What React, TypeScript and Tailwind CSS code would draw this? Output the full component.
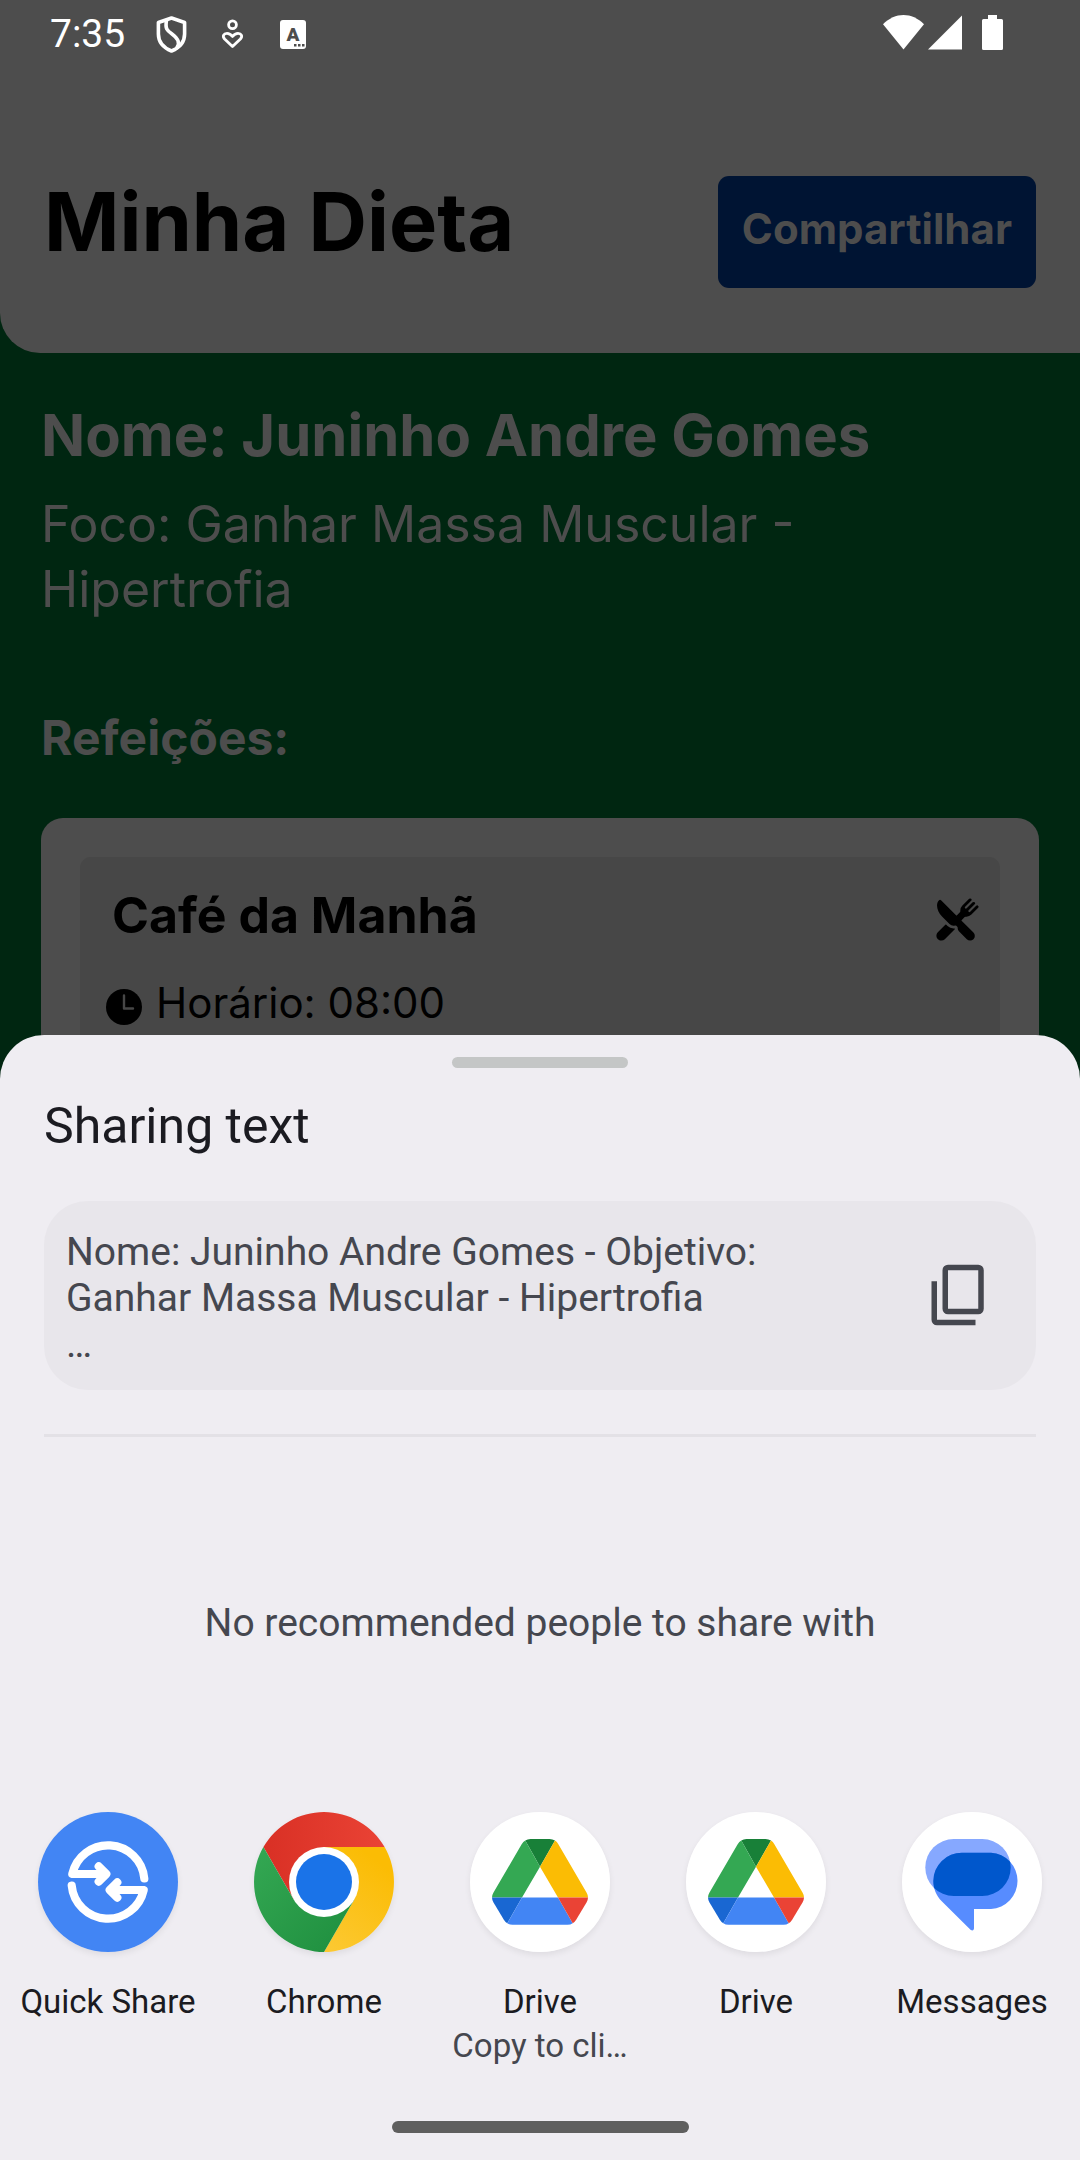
import type { ReactNode } from "react";
import { IoRestaurant } from "react-icons/io5";

function ShieldIcon() {
  return (
    <svg className="h-[37px] w-[31px]" viewBox="0 0 31 37" fill="none" stroke="currentColor" strokeWidth="3.6" strokeLinejoin="round" strokeLinecap="round" aria-hidden="true">
      <path d="M15.500 2 28.600 6.500v11.500C28.600 26.500 23 32 15.500 35 8 32 2.400 26.500 2.400 18V6.500Z" />
      <path d="M10.500 4.500C9 12.500 11 14.500 16 18c5.500 4 8.500 8 5 13.500" />
    </svg>
  );
}

function WellbeingIcon() {
  return (
    <svg className="h-[30px] w-[23px]" viewBox="0 0 23 30" fill="none" stroke="currentColor" strokeWidth="2.800" strokeLinejoin="round" aria-hidden="true">
      <circle cx="11.500" cy="5.700" r="3.900" />
      <path d="M11.500 27.500 3.600 20C1 17 2.800 14.300 6 14.300c2.500 0 4.200 1.500 5.500 3.200 1.300-1.700 3-3.200 5.500-3.200 3.200 0 5 2.700 2.400 5.700Z" />
    </svg>
  );
}

function LetterIcon() {
  return (
    <svg className="h-[29px] w-[26px]" viewBox="0 0 26 29" aria-hidden="true">
      <rect width="26" height="29" rx="3" fill="#fff" />
      <text x="13" y="20.500" textAnchor="middle" className="fill-[#4d4d4d] font-['Roboto',sans-serif] text-[19px] font-black">A</text>
      <path d="M14 24h2.500v2.500H14zM18 24h2.500v2.500H18zM22 24h2.500v2.500H22z" fill="#4d4d4d" />
    </svg>
  );
}

function StatusBar() {
  return (
    <div className="flex h-[68px] items-center justify-between pr-[77px] pl-[50px] font-['Roboto',sans-serif] text-white">
      <div className="flex items-center">
        <span className="mr-[31px] text-[39px] leading-[46px]">7:35</span>
        <span className="mr-[34px]"><ShieldIcon /></span>
        <span className="mr-9"><WellbeingIcon /></span>
        <LetterIcon />
      </div>
      <div className="flex items-center pb-[3px]">
        <svg className="mr-1 h-[35px] w-[41px]" viewBox="0 0 41 35" fill="currentColor" aria-hidden="true">
          <path d="M0 9.300C12-3.100 29-3.100 41 9.300L20.500 34.500Z" />
        </svg>
        <svg className="mr-5 h-[35px] w-[34px]" viewBox="0 0 34 35" fill="currentColor" aria-hidden="true">
          <path d="M34 .5v34H0Z" />
        </svg>
        <svg className="h-[35px] w-[21px]" viewBox="0 0 21 35" fill="currentColor" aria-hidden="true">
          <path d="M6 0h9v4h4.500A1.500 1.500 0 0 1 21 5.500v28a1.500 1.500 0 0 1-1.500 1.500h-18A1.500 1.500 0 0 1 0 33.500v-28A1.500 1.500 0 0 1 1.500 4H6Z" />
        </svg>
      </div>
    </div>
  );
}

function ClockIcon() {
  return (
    <svg className="mt-2 size-9" viewBox="0 0 36 36" aria-hidden="true">
      <circle cx="18" cy="18" r="18" />
      <path d="M18 6.500V19.500H27" fill="none" stroke="#474747" strokeWidth="2.400" strokeLinecap="round" strokeLinejoin="round" />
    </svg>
  );
}

function CopyIcon() {
  return (
    <svg className="size-[66px]" viewBox="0 0 24 24" fill="currentColor" aria-hidden="true">
      <path fillRule="evenodd" d="M8 1h11a2 2 0 0 1 2 2v14a2 2 0 0 1-2 2H8a2 2 0 0 1-2-2V3a2 2 0 0 1 2-2Zm0 2v14h11V3Z" />
      <path d="M2 7v14a2 2 0 0 0 2 2h14v-2H4V7Z" />
    </svg>
  );
}

function QuickShareLogo() {
  return (
    <svg className="size-full" viewBox="0 0 140 140" aria-hidden="true">
      <circle cx="70" cy="70" r="70" fill="#4285f4" />
      <g fill="none" stroke="#fff" strokeWidth="8.200" strokeLinecap="round" strokeLinejoin="round">
        <path d="M106.300 66.500A36.500 36.500 0 0 0 34.300 62H67M60.700 54.300 68.300 62l-7.600 7.700" />
        <path d="M33.700 73.500A36.500 36.500 0 0 0 105.700 78H73M79.300 70.300 71.700 78l7.600 7.700" />
      </g>
    </svg>
  );
}

function ChromeLogo() {
  return (
    <svg className="size-full" viewBox="0 0 140 140" aria-hidden="true">
      <defs>
        <linearGradient id="chrome-red" x1="0" y1="0" x2="1" y2="0"><stop stopColor="#d93025" /><stop offset="1" stopColor="#ea4335" /></linearGradient>
        <linearGradient id="chrome-yellow" x1="0" y1="1" x2="0.500" y2="0"><stop stopColor="#fcc934" /><stop offset="1" stopColor="#fbbc04" /></linearGradient>
        <linearGradient id="chrome-green" x1="1" y1="1" x2="0" y2="0"><stop stopColor="#1e8e3e" /><stop offset="1" stopColor="#34a853" /></linearGradient>
      </defs>
      <path d="M9.400 35A70 70 0 0 1 130.600 35H70L39.700 87.500Z" fill="url(#chrome-red)" />
      <path d="M130.600 35A70 70 0 0 1 70 140L100.300 87.500 70 35Z" fill="url(#chrome-yellow)" />
      <path d="M70 140A70 70 0 0 1 9.400 35L39.700 87.500H100.300Z" fill="url(#chrome-green)" />
      <circle cx="70" cy="70" r="35" fill="#fff" />
      <circle cx="70" cy="70" r="28" fill="#1a73e8" />
    </svg>
  );
}

function DriveLogo() {
  return (
    <svg className="size-full" viewBox="0 0 140 140" aria-hidden="true">
      <circle cx="70" cy="70" r="70" fill="#fff" />
      <path d="M55.300 28.500Q57.500 27 60.500 27H79.500Q82.500 27 85 28.500L70 54.700Z" fill="#188038" />
      <path d="M55.300 28.500Q53.200 29.700 51.500 32.500L23.500 80.500Q22 83 22 85.500H52L70 54.700Z" fill="#34a853" />
      <path d="M85 28.500Q87 29.700 88.500 32.500L116.500 80.500Q118 83 118 85.500H88L70 54.700Z" fill="#fbbc04" />
      <path d="M22 85.500H52L37.300 111.300Q35.500 110.300 34 108L23.500 90.500Q22 88 22 85.500Z" fill="#1967d2" />
      <path d="M52 85.500H88L102.700 111.300Q100.500 112.800 97.500 112.800H42.500Q39.500 112.800 37.300 111.300Z" fill="#4285f4" />
      <path d="M88 85.500H118Q118 88 116.500 90.500L106 108Q104.500 110.300 102.700 111.300Z" fill="#ea4335" />
    </svg>
  );
}

function MessagesLogo() {
  const bubble = "M60 40.700H89A28.200 28.200 0 0 1 89 97H72V116.500Q71.500 119.500 68.500 117.800L40 89.500C34 83.500 31.300 76 31.300 69A28.500 28.500 0 0 1 60 40.700Z";
  return (
    <svg className="size-full" viewBox="0 0 140 140" aria-hidden="true">
      <defs><clipPath id="bubble-clip"><path d={bubble} /></clipPath></defs>
      <circle cx="70" cy="70" r="70" fill="#fff" />
      <rect x="23.300" y="27" width="85.400" height="57" rx="28.500" fill="#86a8ff" />
      <path d={bubble} fill="#578cff" />
      <rect x="23.300" y="27" width="85.400" height="57" rx="28.500" fill="#0057cc" clipPath="url(#bubble-clip)" />
    </svg>
  );
}

type Target = { id: string; label: string; detail?: string; logo: ReactNode };

const targets: Target[] = [
  { id: "quick-share", label: "Quick Share", logo: <QuickShareLogo /> },
  { id: "chrome", label: "Chrome", logo: <ChromeLogo /> },
  { id: "drive-clipboard", label: "Drive", detail: "Copy to cli…", logo: <DriveLogo /> },
  { id: "drive", label: "Drive", logo: <DriveLogo /> },
  { id: "messages", label: "Messages", logo: <MessagesLogo /> },
];

function DietScreen() {
  return (
    <div className="font-['Inter',sans-serif] text-[#4d4d4d]">
      <header className="rounded-bl-[40px] bg-[#4d4d4d]">
        <StatusBar />
        <div className="flex items-start justify-between pt-[108px] pr-11 pb-[65px] pl-11">
          <h1 className="text-[81px] leading-[92px] font-bold text-black">Minha Dieta</h1>
          <button type="button" className="h-28 rounded-[11px] bg-[#001433] px-6 pb-2 text-[42px] font-bold">
            Compartilhar
          </button>
        </div>
      </header>

      <main className="px-[41px] pt-[50px]">
        <p className="text-[58px] leading-[65px] font-bold">Nome: Juninho Andre Gomes</p>
        <p className="mt-6 pr-20 text-[50px] leading-[65px]">Foco: Ganhar Massa Muscular - Hipertrofia</p>
        <h2 className="mt-[84px] text-[48px] leading-[64px] font-bold">Refeições:</h2>

        <section className="mt-12 rounded-t-[22px] bg-[#4d4d4d] px-[39px] pt-[39px] text-black">
          <article className="rounded-t-[11px] bg-[#474747] pt-[26px] pr-5 pb-20 pl-[26px]">
            <div className="flex items-center justify-between">
              <h3 className="pl-1.5 text-[50px] leading-[64px] font-bold">Café da Manhã</h3>
              <IoRestaurant className="mt-2 size-[45px]" />
            </div>
            <div className="mt-6 flex items-center gap-3.5">
              <ClockIcon />
              <p className="text-[42px] leading-[64px]">Horário: 08:00</p>
            </div>
          </article>
        </section>
      </main>
    </div>
  );
}

function ShareSheet() {
  return (
    <div role="dialog" aria-labelledby="share-title" className="absolute inset-x-0 bottom-0 rounded-t-[44px] bg-[#efedf2] pt-[22px] pb-[27px] font-['Roboto',sans-serif] text-[#1b1b21]">
      <div className="mx-auto h-[11px] w-44 rounded-full bg-[#c4c6c6]" />
      <div className="px-11">
        <h2 id="share-title" className="mt-7 text-[50px] leading-[60px]">Sharing text</h2>
        <div className="mt-[45px] flex items-center justify-between rounded-[44px] bg-[#e8e6eb] pt-7 pr-11 pb-[23px] pl-[22px] text-[#45474f]">
          <p className="pr-20 text-[39px] leading-[46px]">
            Nome: Juninho Andre Gomes - Objetivo: Ganhar Massa Muscular - Hipertrofia
            <br />…
          </p>
          <button type="button" aria-label="Copy text" className="mb-1.5 shrink-0"><CopyIcon /></button>
        </div>
        <hr className="mt-11 border-t-[3px] border-[#e3e1e6]" />
        <p className="mt-[163px] text-center text-[39px] leading-[46px] text-[#45474f]">No recommended people to share with</p>
      </div>

      <ul className="mt-[166px] grid grid-cols-5">
        {targets.map((target) => (
          <li key={target.id}>
            <button type="button" className="flex w-full flex-col items-center text-[33px] leading-[44px]">
              <span className="mb-7 size-[140px] rounded-full shadow-[0_3px_6px_rgba(0,0,0,0.07)]">{target.logo}</span>
              <span>{target.label}</span>
              {target.detail && <span className="text-[#45474f]">{target.detail}</span>}
            </button>
          </li>
        ))}
      </ul>
      <div className="mx-auto mt-[53px] h-3 w-[297px] rounded-full bg-[#5f5f5f]" />
    </div>
  );
}

export default function App() {
  return (
    <div className="relative h-screen overflow-hidden bg-[#002611]">
      <DietScreen />
      <ShareSheet />
    </div>
  );
}
